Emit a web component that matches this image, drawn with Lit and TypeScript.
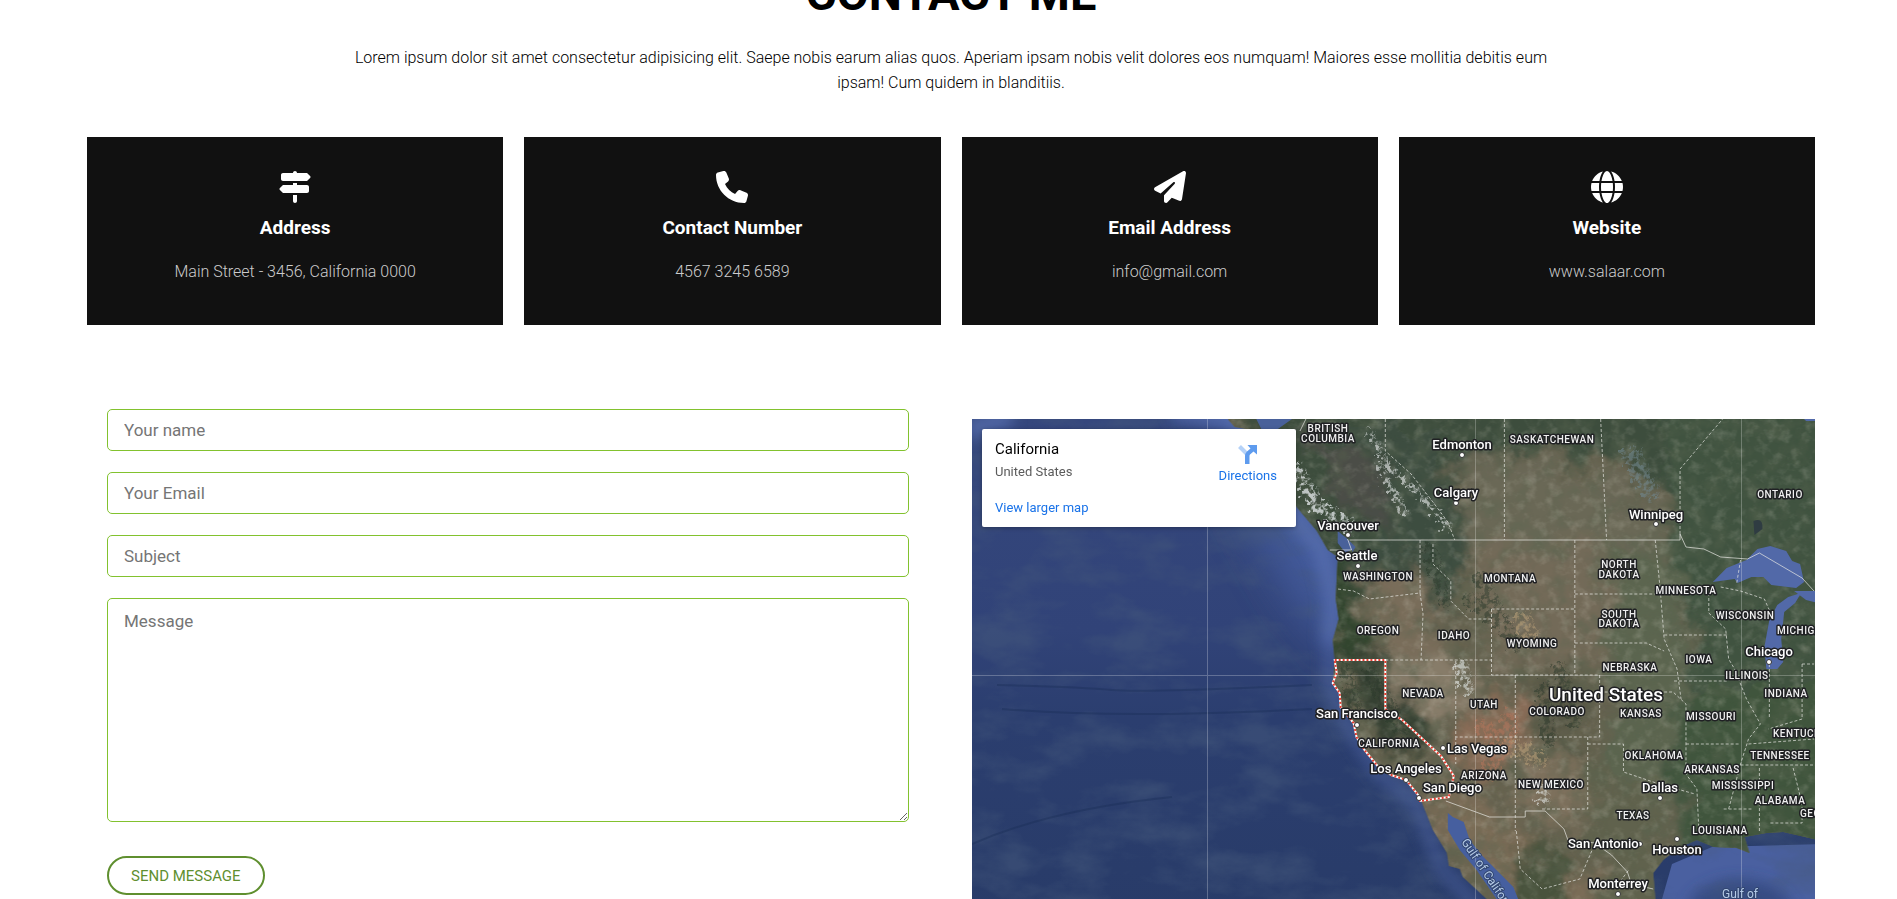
import { LitElement, html, svg, css } from "lit";
import { customElement } from "lit/decorators.js";

const icons = {
  signs: "M224 32H64C46.3 32 32 46.3 32 64v64c0 17.7 14.3 32 32 32H441.4c4.2 0 8.3-1.7 11.3-4.7l48-48c6.2-6.2 6.2-16.4 0-22.6l-48-48c-3-3-7.1-4.7-11.3-4.7H288c0-17.7-14.3-32-32-32s-32 14.3-32 32zM480 256c0-17.7-14.3-32-32-32H288V192H224v32H70.6c-4.2 0-8.3 1.7-11.3 4.7l-48 48c-6.2 6.2-6.2 16.4 0 22.6l48 48c3 3 7.1 4.7 11.3 4.7H448c17.7 0 32-14.3 32-32V256zM288 480V384H224v96c0 17.7 14.3 32 32 32s32-14.3 32-32z",
  phone: "M164.9 24.6c-7.7-18.6-28-28.5-47.4-23.2l-88 24C12.1 30.2 0 46 0 64C0 311.4 200.6 512 448 512c18 0 33.8-12.1 38.6-29.5l24-88c5.3-19.4-4.6-39.7-23.2-47.4l-96-40c-16.3-6.8-35.2-2.1-46.3 11.6L304.7 368C234.3 334.7 177.3 277.7 144 207.3L193.3 167c13.7-11.2 18.4-30 11.6-46.3l-40-96z",
  plane: "M498.1 5.6c10.1 7 15.4 19.1 13.5 31.2l-64 416c-1.5 9.7-7.4 18.2-16 23s-18.9 5.4-28 1.6L284 427.7l-68.5 74.1c-8.9 9.7-22.9 12.9-35.2 8.1S160 493.2 160 480V396.4c0-4 1.5-7.8 4.2-10.7L331.8 202.8c5.8-6.3 5.6-16-.4-22s-15.7-6.4-22-.7L106 360.8 17.7 316.6C7.1 311.3 .3 300.7 0 288.9s5.9-22.8 16.1-28.7l448-256c10.7-6.1 23.9-5.5 34 1.4z",
  globe: "M352 256c0 22.2-1.2 43.6-3.3 64H163.3c-2.2-20.4-3.3-41.8-3.3-64s1.2-43.6 3.3-64H348.7c2.2 20.4 3.3 41.8 3.3 64zm28.8-64H503.9c5.3 20.5 8.1 41.9 8.1 64s-2.8 43.5-8.1 64H380.8c2.1-20.6 3.2-42 3.2-64s-1.1-43.4-3.2-64zm112.6-32H376.7c-10-63.9-29.8-117.4-55.3-151.6c78.3 20.7 142 77.5 171.9 151.6zm-149.1 0H167.7c6.1-36.4 15.5-68.6 27-94.7c10.5-23.6 22.2-40.7 33.5-51.5C239.4 3.2 248.7 0 256 0s16.6 3.2 27.8 13.8c11.3 10.8 23 27.9 33.5 51.5c11.6 26 20.9 58.2 27 94.7zm-209 0H18.6C48.6 85.9 112.2 29.1 190.6 8.4C165.1 42.6 145.3 96.1 135.3 160zM8.1 192H131.2c-2.1 20.6-3.2 42-3.2 64s1.1 43.4 3.2 64H8.1C2.8 299.5 0 278.1 0 256s2.8-43.5 8.1-64zM194.7 446.6c-11.6-26-20.9-58.2-27-94.6H344.3c-6.1 36.4-15.5 68.6-27 94.6c-10.5 23.6-22.2 40.7-33.5 51.5C272.6 508.8 263.3 512 256 512s-16.6-3.2-27.8-13.8c-11.3-10.8-23-27.9-33.5-51.5zM135.3 352c10 63.9 29.8 117.4 55.3 151.6C112.2 482.9 48.6 426.1 18.6 352H135.3zm358.1 0c-30 74.1-93.6 130.9-171.9 151.6c25.5-34.2 45.2-87.7 55.3-151.6H493.4z",
};

const contacts = [
  { icon: icons.signs, title: "Address", text: "Main Street - 3456, California 0000" },
  { icon: icons.phone, title: "Contact Number", text: "4567 3245 6589" },
  { icon: icons.plane, title: "Email Address", text: "info@gmail.com" },
  { icon: icons.globe, title: "Website", text: "www.salaar.com" },
];

type Label = [string, number, number, string?];

const states: Label[] = [
  ["BRITISH", 356, 13], ["COLUMBIA", 356, 23], ["SASKATCHEWAN", 580, 24], ["ONTARIO", 808, 79],
  ["WASHINGTON", 406, 161], ["MONTANA", 538, 163], ["NORTH", 647, 149], ["DAKOTA", 647, 159],
  ["MINNESOTA", 714, 175], ["SOUTH", 647, 199], ["DAKOTA", 647, 208], ["WISCONSIN", 773, 200],
  ["MICHIGAN", 805, 215, "start"], ["OREGON", 406, 215], ["IDAHO", 482, 220], ["WYOMING", 560, 228],
  ["IOWA", 727, 244], ["NEBRASKA", 658, 252], ["ILLINOIS", 775, 260], ["NEVADA", 451, 278],
  ["UTAH", 512, 289], ["COLORADO", 585, 296], ["INDIANA", 814, 278], ["KANSAS", 669, 298],
  ["MISSOURI", 739, 301], ["KENTUCKY", 801, 318, "start"], ["CALIFORNIA", 417, 328],
  ["OKLAHOMA", 682, 340], ["TENNESSEE", 808, 340], ["ARKANSAS", 740, 354], ["ARIZONA", 512, 360],
  ["NEW MEXICO", 579, 369], ["MISSISSIPPI", 771, 370], ["ALABAMA", 808, 385],
  ["GEORGIA", 828, 398, "start"], ["TEXAS", 661, 400], ["LOUISIANA", 748, 415],
];

const cities: Label[] = [
  ["Edmonton", 490, 30], ["Calgary", 484, 78], ["Vancouver", 376, 111], ["Seattle", 385, 141],
  ["Winnipeg", 684, 100], ["Chicago", 797, 237], ["San Francisco", 385, 299],
  ["Las Vegas", 475, 334, "start"], ["Los Angeles", 434, 354], ["San Diego", 451, 373, "start"],
  ["Dallas", 688, 373], ["San Antonio", 596, 429, "start"], ["Houston", 705, 435], ["Monterrey", 646, 469],
];

const dots = [
  [490, 36], [484, 84], [376, 116], [386, 147], [684, 105], [797, 243], [385, 306],
  [471, 329], [434, 361], [447, 379], [688, 379], [668, 425], [705, 420], [646, 475],
];

const land = "M255 0L262 8L285 12L290 40L310 70L328 92L345 112L356 131L366 138L364 180L367 200L361 221L363 241L361 264L368 274L369 288L382 304L385 318L393 331L407 348L420 356L435 361L447 376L451 384L462 411L476 434L478 447L489 450L492 458L503 468L516 480L560 600H700L686 480L684 454L694 441L711 428L728 421L745 428L768 429L781 434L776 418L798 414L815 413L850 421V0Z";
const gulf = "M477 394L482 398L493 403L499 421L511 436L523 448L543 468L552 490L570 540L540 520L526 480L506 451L489 431L477 411Z";
const california = "M363 241H414V290L431 301L470 337L483 357L478 378L449 382L447 376L435 361L420 356L407 348L393 331L385 318L382 304L369 288L368 274L361 264L365 254Z";

@customElement("california-map")
export class CaliforniaMap extends LitElement {
  static styles = css`
    :host { display: block; position: relative; overflow: hidden; height: 600px; font-family: Roboto, sans-serif; background: #2c4073; }
    .canvas { display: block; width: 100%; height: 100%; }
    .line { fill: none; stroke: #e8e8e4; stroke-opacity: 0.7; stroke-width: 1; }
    .dashed { stroke-dasharray: 3 2; }
    .grid { fill: none; stroke: #fff; stroke-opacity: 0.25; stroke-width: 1; shape-rendering: crispEdges; }
    .label { fill: #fff; stroke: #202124; stroke-width: 3; paint-order: stroke; stroke-linejoin: round; text-anchor: middle; }
    .label.start { text-anchor: start; }
    .state { font-size: 10px; font-weight: 500; letter-spacing: 0.05em; fill: #f0f0f0; }
    .city { font-size: 13px; font-weight: 500; }
    .country { font-size: 19px; font-weight: 500; }
    .water { font-size: 12px; fill: #b5cbe8; stroke-width: 2; stroke: #31456f; }
    .dot { fill: #fff; stroke: #333; stroke-width: 1; }
    .card {
      position: absolute; left: 10px; top: 10px; width: 314px; box-sizing: border-box; padding: 12px 19px 11px 13px;
      display: flex; justify-content: space-between; background: #fff; border-radius: 2px; box-shadow: 0 1px 4px rgba(0, 0, 0, 0.3);
      font-size: 13px; line-height: 16px;
    }
    .place { margin: 0; font-size: 15px; line-height: 17px; font-weight: 400; color: #000; }
    .region { margin: 6px 0 20px; color: #5b5b5b; }
    .link { color: #1a73e8; text-decoration: none; }
    .directions { display: flex; flex-direction: column; align-items: center; gap: 3px; margin-top: 2px; }
    .arrow { width: 22px; height: 22px; }
  `;

  render() {
    return html`
      <svg class="canvas" viewBox="0 0 844 600" preserveAspectRatio="xMinYMin slice" role="img" aria-label="Satellite map of California">
        <defs>
          <clipPath id="land"><path d=${land} /></clipPath>
          <filter id="soft" x="-30%" y="-30%" width="160%" height="160%">
            <feGaussianBlur stdDeviation="7" result="b" />
            <feTurbulence type="fractalNoise" baseFrequency="0.03" numOctaves="4" seed="11" result="n" />
            <feDisplacementMap in="b" in2="n" scale="60" xChannelSelector="R" yChannelSelector="G" />
          </filter>
          <filter id="shelf" x="-30%" y="-30%" width="160%" height="160%"><feGaussianBlur stdDeviation="7" /></filter>
          <filter id="wide" x="-50%" y="-50%" width="200%" height="200%"><feGaussianBlur stdDeviation="22" /></filter>
          <filter id="rough" x="-20%" y="-20%" width="140%" height="140%">
            <feTurbulence type="fractalNoise" baseFrequency="0.2" numOctaves="4" seed="4" result="n" />
            <feDisplacementMap in="SourceGraphic" in2="n" scale="20" xChannelSelector="R" yChannelSelector="G" result="d" />
            <feColorMatrix in="n" type="matrix" values="0 0 0 0 1 0 0 0 0 1 0 0 0 0 1 5 0 0 0 -2.1" result="m" />
            <feComposite in="d" in2="m" operator="in" />
          </filter>
          <filter id="relief" x="0" y="0" width="100%" height="100%">
            <feTurbulence type="fractalNoise" baseFrequency="0.05" numOctaves="6" seed="8" />
            <feColorMatrix type="matrix" values="0 0 0 0 0.1 0 0 0 0 0.13 0 0 0 0 0.08 2.2 0 0 0 -0.95" />
          </filter>
          <filter id="grain" x="0" y="0" width="100%" height="100%">
            <feTurbulence type="fractalNoise" baseFrequency="0.09" numOctaves="5" seed="21" />
            <feColorMatrix type="matrix" values="0 0 0 0 0.72 0 0 0 0 0.7 0 0 0 0 0.6 2 0 0 0 -0.95" />
          </filter>
          <filter id="seabed" x="0" y="0" width="100%" height="100%">
            <feTurbulence type="fractalNoise" baseFrequency="0.015 0.03" numOctaves="7" seed="3" />
            <feColorMatrix type="matrix" values="0 0 0 0 0.06 0 0 0 0 0.1 0 0 0 0 0.2 2.8 0 0 0 -1.2" />
          </filter>
          <linearGradient id="sea" x1="0" y1="0" x2="0" y2="1">
            <stop offset="0" stop-color="#35477d" /><stop offset="0.35" stop-color="#314378" />
            <stop offset="0.5" stop-color="#2b3e6f" /><stop offset="1" stop-color="#273a65" />
          </linearGradient>
        </defs>

        <rect width="844" height="600" fill="url(#sea)" />
        <path d="M230 -40H380V250L320 180L270 90Z" fill="#4a62a6" opacity="0.75" filter="url(#wide)" />
        <path d="M690 480L700 445L740 428L850 425V600H700Z" fill="#4a60a0" />
        <path d="M720 478Q745 455 785 462T830 520L760 560L700 530Z" fill="#32467c" opacity="0.8" filter="url(#shelf)" />
        <rect width="844" height="600" filter="url(#seabed)" opacity="0.5" />
        <path d="M25 266Q110 268 140 271T340 266M30 290Q150 300 340 290M0 425Q80 390 200 378" fill="none" stroke="#172a52" stroke-width="2" opacity="0.35" />
        <g filter="url(#shelf)" fill="none" stroke="#5a72b4" stroke-width="14" opacity="0.7">
          <path d="M-5 12L40 -4M200 -8L262 -2L300 70L350 130L362 180L358 225" stroke-width="20" />
          <path d="M358 225L358 265L378 310L405 352L445 385L470 450L516 500" opacity="0.6" />
        </g>

        <g transform="translate(2.5 0) scale(0.9923 1)">
          <path d=${land} fill="#65624f" />
          <g clip-path="url(#land)">
            <g filter="url(#soft)">
              <path d="M250 -30H880V60L700 80L640 40L520 30L470 55L500 120L440 130L380 180L370 230L350 150Z" fill="#3c4d3e" />
              <path d="M360 -10L460 20L500 110L480 190L440 210L400 130Z" fill="#3e4d3f" />
              <path d="M330 10L400 40L420 110L360 80Z" fill="#4b4d46" />
              <path d="M490 35L600 50L680 75L690 130L500 135Z" fill="#6b6857" />
              <path d="M700 -20H880V430H730L700 360L730 220L700 150Z" fill="#405241" />
              <path d="M640 130L705 130L720 250L700 400L640 370Z" fill="#5c6550" />
              <path d="M500 130H640V240H520Z" fill="#736b58" />
              <path d="M355 140H390V240H355Z" fill="#30442f" />
              <path d="M400 150L450 145L460 190L480 235L410 238Z" fill="#796d5a" />
              <path d="M363 235H410L450 320L430 340L400 300Z" fill="#364130" />
              <path d="M420 240L500 235L500 290L450 310Z" fill="#877b69" />
              <path d="M500 290L550 270L560 340L520 360L480 340Z" fill="#886c56" />
              <path d="M560 255L620 240L605 340L570 320Z" fill="#565644" />
              <path d="M550 330L600 340L630 400L560 400Z" fill="#7d705b" />
              <path d="M440 380L520 375L560 430L640 470L600 600L500 440Z" fill="#7a6c56" />
              <path d="M545 420L590 440L620 600L560 560Z" fill="#49533e" />
              <path d="M610 330L690 370L700 440L670 600L620 430Z" fill="#60624d" />
              <path d="M700 280L870 260V440H720Z" fill="#41543d" />
            </g>
            <rect width="860" height="600" filter="url(#relief)" opacity="0.5" />
            <rect width="860" height="600" filter="url(#grain)" opacity="0.25" />
            <g filter="url(#rough)" fill="none" stroke-linecap="round">
              <path d="M325 50L345 85L378 106" stroke="#e6eaec" stroke-width="14" opacity="0.75" />
              <path d="M398 12L420 48L450 75L478 108M408 45L435 95" stroke="#e0e4e4" stroke-width="7" opacity="0.65" />
              <path d="M492 245L498 270M574 372V380" stroke="#dfe4e0" stroke-width="12" opacity="0.65" />
              <path d="M553 200L562 218M540 325L570 340" stroke="#b79f78" stroke-width="18" opacity="0.6" />
              <path d="M515 310L535 325L520 350M540 300V312" stroke="#b0755a" stroke-width="18" opacity="0.6" />
              <path d="M375 250L385 290M400 255L432 310M575 270L580 320M590 250L605 300M460 130L475 180M500 180L530 205M510 160L545 225" stroke="#2b382e" stroke-width="14" opacity="0.5" />
            </g>
            <g filter="url(#rough)" opacity="0.6"><path d="M650 30L672 30L692 75L680 85L664 60Z" fill="#71858c" /></g>
          </g>
          <path d=${gulf} fill="#465f9f" />
          <path d="M284 0L290 12L300 14L320 0ZM366 112L376 120L381 130L374 134L366 124ZM376 120L384 128L381 133Z" fill="#49619a" />
          <g fill="#5269a8">
            <path d="M744 163L758 149L778 141L789 130L802 127L818 132L824 142L832 145L836 163L828 169L803 166L795 158L783 158L769 164L766 160Z" />
            <path d="M798 250L796 228L801 201L809 186L820 178L833 174L827 184L816 193L813 220L815 243L809 250Z" />
            <path d="M826 172H850V184L838 181ZM836 0H850V2H838Z" />
          </g>
          <path d="M785 102Q795 98 794 110L786 116Z" fill="#2f3c42" />

          <path class="line" d="M378 121H711V115L717 128L735 130L752 138L779 140L791 134L834 159L846 172M475 382L519 398H555V392H575L594 410L598 421L625 424L642 436L658 453L662 465L684 470M376 120L380 131L358 131M334 0L328 12" />
          <path class="line dashed" d="M414 0V32L440 55L462 83L477 103L484 121M534 0V121M631 0L637 121M711 115V50L754 0M449 121V174L398 180L382 172L366 170M462 125V145L480 162V182L498 200L521 200M449 174L452 195L450 241M605 121V256M605 175H686M521 190H605M521 190V256H630V318H485V241M545 256V412M414 241H521M686 121L691 170L695 220L708 250L712 280M605 224H677L695 232M695 216H758M740 174V194L757 210L760 240L766 250L778 280L792 305L780 320L772 345L760 390M630 273H704L717 285V355L728 370L730 412M618 318V390H572M618 325H654V353L690 365L726 375M717 325H772M485 318V345M755 390H785M791 349V414M825 349L834 385V404H802M780 325L846 320M772 346H846M752 168L772 172L796 180L805 200M705 262H760M801 245V300M772 141L768 165M546 412L550 450L572 470L610 460L625 425M834 245H846M645 470L660 450M834 245V300L800 310" />
          <path d=${california} fill="none" stroke="#fff" stroke-width="2" />
          <path d=${california} fill="none" stroke="#e33b2e" stroke-width="2" stroke-dasharray="2 2" />
        </g>
        <path class="grid" d="M235 0V600M503 0V600M769 0V600M0 256H844" />

        ${dots.map(([x, y]) => svg`<circle class="dot" cx=${x} cy=${y} r="2.5" />`)}
        ${states.map(([t, x, y, a]) => svg`<text class="label state ${a ?? ""}" x=${x} y=${y}>${t}</text>`)}
        ${cities.map(([t, x, y, a]) => svg`<text class="label city ${a ?? ""}" x=${x} y=${y}>${t}</text>`)}
        <text class="label country" x="634" y="282">United States</text>
        <text class="label water" x="768" y="479">Gulf of</text>
        <text class="label water start" transform="translate(489 423) rotate(56)">Gulf of California</text>
      </svg>
      <div class="card">
        <div>
          <p class="place">California</p>
          <p class="region">United States</p>
          <a class="link" href="#map">View larger map</a>
        </div>
        <div>
          <a class="link directions" href="#directions">
            <svg class="arrow" viewBox="0 0 22 22" aria-hidden="true">
              <path d="M2.500 3.500L10.500 11.500" fill="none" stroke="#b5d2f8" stroke-width="4" />
              <path d="M8 21V13Q8 10.500 10 8.500L13.500 5.500L10.500 2H20V11.500L16.500 8.500L13 11.500Q12.500 12 12.500 13V21Z" fill="#5e9bee" />
            </svg>
            Directions
          </a>
        </div>
      </div>
    `;
  }
}

@customElement("app-root")
export class AppRoot extends LitElement {
  static styles = css`
    :host { display: block; height: 100vh; overflow: hidden; background: #fff; font-family: Roboto, sans-serif; color: #000; }
    .contact { margin-top: -34px; padding: 0 82px 0 87px; }
    .title { margin: 0; text-align: center; font-size: 47px; line-height: 56px; font-weight: 700; text-transform: uppercase; }
    .intro { margin: 23px auto 42px; max-width: 1210px; text-align: center; font-size: 16px; line-height: 25px; font-weight: 300; }
    .cards { display: grid; grid-template-columns: repeat(4, 1fr); gap: 21px; }
    .card { display: flex; flex-direction: column; align-items: center; padding: 34px 16px 41px; background: #111; text-align: center; }
    .icon { width: 32px; height: 32px; fill: #fff; }
    .name { margin: 13px 0 19px; font-size: 19px; line-height: 24px; font-weight: 700; color: #fff; }
    .text { margin: 0; font-size: 16px; line-height: 25px; font-weight: 300; color: #ccc; }
    .columns { display: grid; grid-template-columns: 802fr 843fr; gap: 63px; padding: 84px 0 0 20px; }
    .form { display: flex; flex-direction: column; align-items: flex-start; gap: 21px; }
    .field {
      display: block; width: 100%; height: 42px; box-sizing: border-box; margin: 0; padding: 8px 16px; border: 1px solid #82c22e;
      border-radius: 5px; background: #fff; font: 400 17px/24px Roboto, sans-serif; color: #222; outline: none;
    }
    .field::placeholder { color: #757575; opacity: 1; }
    .message { height: 224px; padding-top: 10px; resize: both; }
    .send {
      margin-top: 13px; padding: 0 22px; height: 39px; border: 2px solid #5f8f2f; border-radius: 20px; background: #fff;
      font: 400 15px/24px Roboto, sans-serif; color: #5f8f2f; text-transform: uppercase; cursor: pointer;
    }
    .map { margin-top: 10px; }
  `;

  render() {
    return html`
      <section class="contact">
        <h1 class="title">Contact me</h1>
        <p class="intro">
          Lorem ipsum dolor sit amet consectetur adipisicing elit. Saepe nobis earum alias quos. Aperiam ipsam nobis velit
          dolores eos numquam! Maiores esse mollitia debitis eum ipsam! Cum quidem in blanditiis.
        </p>
        <div class="cards">
          ${contacts.map(
            (c) => html`<article class="card">
              <svg class="icon" viewBox="0 0 512 512" aria-hidden="true"><path d=${c.icon} /></svg>
              <h2 class="name">${c.title}</h2>
              <p class="text">${c.text}</p>
            </article>`
          )}
        </div>
        <div class="columns">
          <form class="form" @submit=${(e: Event) => e.preventDefault()}>
            <input class="field" type="text" placeholder="Your name" aria-label="Your name" />
            <input class="field" type="email" placeholder="Your Email" aria-label="Your Email" />
            <input class="field" type="text" placeholder="Subject" aria-label="Subject" />
            <textarea class="field message" placeholder="Message" aria-label="Message"></textarea>
            <button class="send" type="submit">Send message</button>
          </form>
          <california-map class="map"></california-map>
        </div>
      </section>
    `;
  }
}
